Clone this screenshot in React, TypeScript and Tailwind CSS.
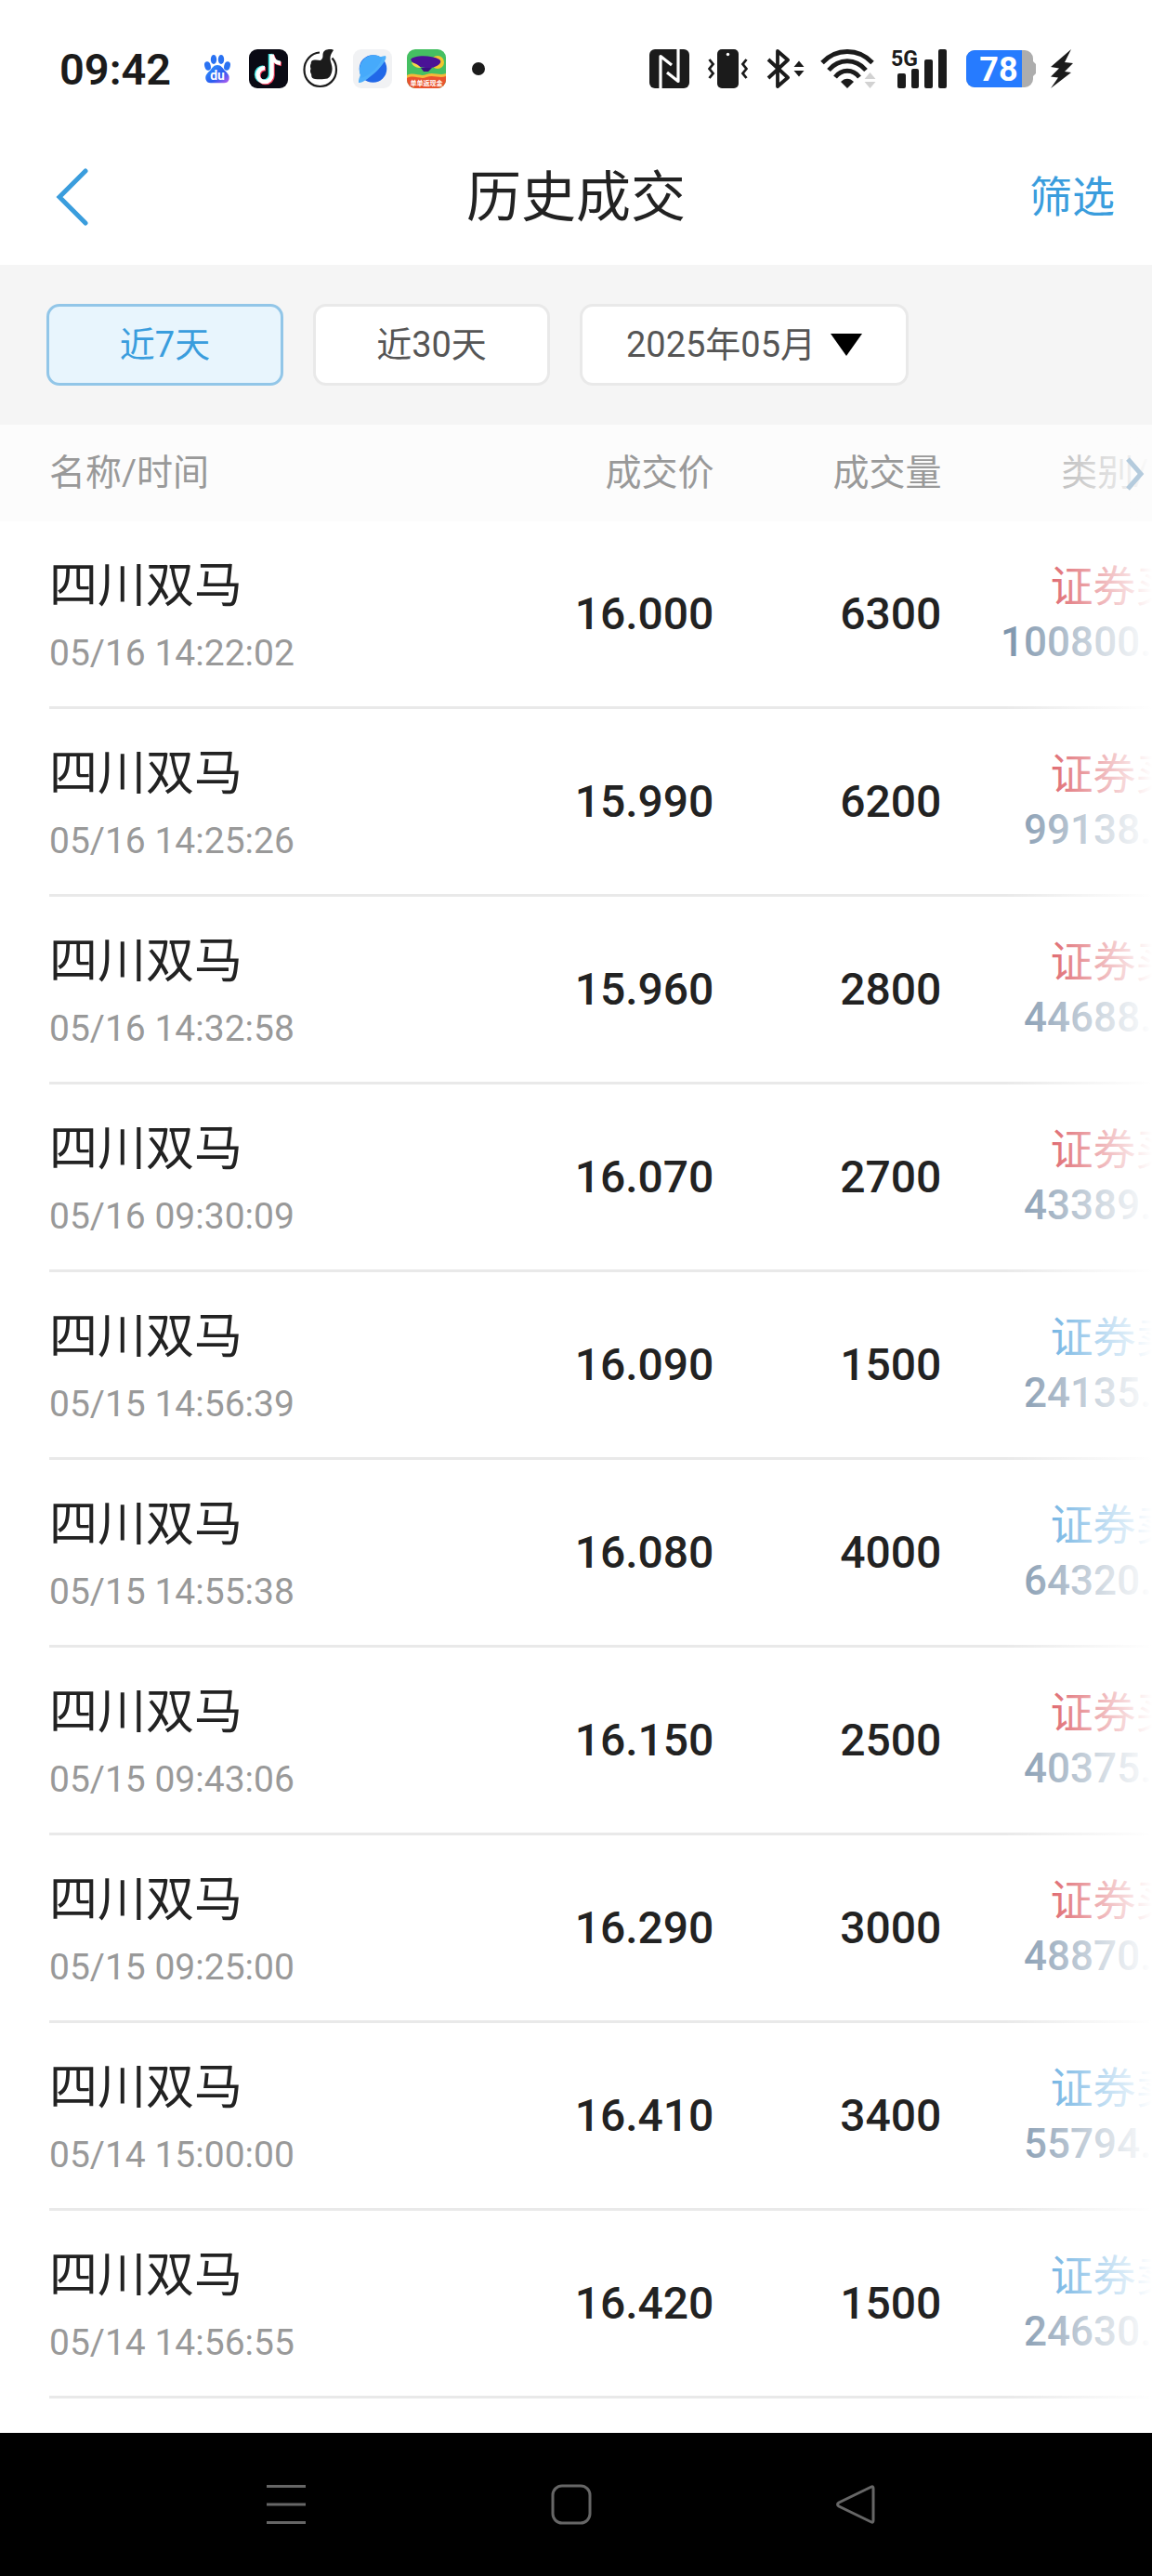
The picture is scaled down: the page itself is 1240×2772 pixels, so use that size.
import { useState } from "react";

type Trade = {
  time: string;
  price: string;
  volume: string;
  side: "buy" | "sell";
  amount: string;
};

const trades: Trade[] = [
  { time: "05/16 14:22:02", price: "16.000", volume: "6300", side: "buy", amount: "100800.000" },
  { time: "05/16 14:25:26", price: "15.990", volume: "6200", side: "buy", amount: "99138.000" },
  { time: "05/16 14:32:58", price: "15.960", volume: "2800", side: "buy", amount: "44688.000" },
  { time: "05/16 09:30:09", price: "16.070", volume: "2700", side: "buy", amount: "43389.000" },
  { time: "05/15 14:56:39", price: "16.090", volume: "1500", side: "sell", amount: "24135.000" },
  { time: "05/15 14:55:38", price: "16.080", volume: "4000", side: "sell", amount: "64320.000" },
  { time: "05/15 09:43:06", price: "16.150", volume: "2500", side: "buy", amount: "40375.000" },
  { time: "05/15 09:25:00", price: "16.290", volume: "3000", side: "buy", amount: "48870.000" },
  { time: "05/14 15:00:00", price: "16.410", volume: "3400", side: "sell", amount: "55794.000" },
  { time: "05/14 14:56:55", price: "16.420", volume: "1500", side: "sell", amount: "24630.000" },
];

function AppIcons() {
  return (
    <div className="flex items-center gap-4">
      {/* Baidu */}
      <svg width="36" height="42" viewBox="-3 0 36 42">
        <defs>
          <linearGradient id="paw" x1="0" y1="0" x2="1" y2="1">
            <stop offset="0" stopColor="#2f9bff" />
            <stop offset="0.6" stopColor="#2b5cf0" />
            <stop offset="1" stopColor="#c05cf0" />
          </linearGradient>
        </defs>
        <g fill="#2a72f2">
          <ellipse cx="4.5" cy="18" rx="3.3" ry="4.8" transform="rotate(-15 4.5 18)" />
          <ellipse cx="11" cy="11" rx="3.2" ry="5" />
          <ellipse cx="19" cy="11" rx="3.2" ry="5" />
          <ellipse cx="25.5" cy="18" rx="3.3" ry="4.8" transform="rotate(15 25.5 18)" />
        </g>
        <path d="M15 17c-4 0-5.5 3-8 6-3 3-5.5 5-4.5 9.5C3.5 36 6 36.5 9 36.200h12c3 .3 5.500-.2 6.500-3.700 1-4.500-1.500-6.500-4.500-9.500-2.500-3-4-6-8-6z" fill="url(#paw)" />
        <text x="15" y="33" fontSize="14" fontWeight="700" textAnchor="middle" fill="#fff" fontFamily="Roboto, sans-serif">du</text>
      </svg>
      {/* TikTok */}
      <svg width="42" height="42" viewBox="0 0 42 42">
        <rect width="42" height="42" rx="9" fill="#0a0a14" />
        <g fill="none" strokeWidth="4.5">
          <path d="M23 5v22a7.500 7.500 0 1 1-7.500-7.500M23 5c.5 5 4 9 9.500 9.500" stroke="#3be8e4" />
          <path d="M25.500 6.500v22a7.500 7.500 0 1 1-7.500-7.500M25.500 6.500c.5 5 4 9 9.500 9.500" stroke="#f53b5b" />
          <path d="M24.500 5.500v22a7.500 7.500 0 1 1-7.500-7.500M24.500 5.500c.5 5 4 9 9.500 9.500" stroke="#fff" />
        </g>
      </svg>
      {/* Thumb */}
      <svg width="38" height="42" viewBox="0 0 38 42">
        <path d="M18 3.500C9 4 1.500 12 1.500 22c0 11 8 18 17 18s17.500-7 17.500-18c0-5-1.500-9-4.500-12.500" fill="none" stroke="#1b1b1b" strokeWidth="2.200" />
        <path d="M33 1c-2 3-4 6-3.500 10 .3 3 2.500 7 2 11-.3 4-2 8-5 9.500-3 .8-9 1-13.500.5-3-.5-4-2-3.800-5-1.500-2-1.500-4-.7-6-.8-2-.7-4 .2-5.500C8.500 12 11 11 14 11.500l5 .5c2-1.500 2.500-3 2.500-5.500C21.500 3 23.500.5 27 .3 29-.3 32 0 33 1z" fill="#1b1b1b" />
      </svg>
      {/* Browser */}
      <svg width="42" height="42" viewBox="0 0 42 42">
        <rect width="42" height="42" rx="9" fill="#f1f2f4" />
        <circle cx="21.500" cy="21" r="14.800" fill="#2168e8" />
        <path d="M6 34C8 23 20 9 35 7c2 3-3 10-10 17C18 30 10 37 6 36z" fill="#4fb0fb" />
        <path d="M7 24C6 14 14 6 22 6.200c4 0 7 1 9.500 3.500C27 20 18 28 8.500 31z" fill="#46aafb" />
      </svg>
      {/* Shopping */}
      <svg width="42" height="42" viewBox="0 0 42 42">
        <defs>
          <clipPath id="shop">
            <rect width="42" height="42" rx="9" />
          </clipPath>
        </defs>
        <g clipPath="url(#shop)">
          <rect width="42" height="42" fill="#45bf62" />
          <circle cx="33" cy="14" r="7" fill="#f2c62e" />
          <path d="M4 11c4-5 22-5 31 0 4 3-2 8-9 9-8 1-19-2-22-9z" fill="#4a1296" />
          <path d="M15 20h12l-4 4h-5z" fill="#3a0f80" />
          <path d="M5 14c4 1 8 3 10 6-5 0-9-2-10-6z" fill="#f5d84a" />
          <path d="M0 29c8-4 14 2 21-1 8-3 14 2 21-1v15H0z" fill="#e9542f" />
          <path d="M0 28c8-4 14 2 21-1 8-3 14 2 21-1v3c-7 3-13-2-21 1-7 3-13-3-21 1z" fill="#f6b83a" />
          <text x="21" y="39" fontSize="7" fontWeight="700" textAnchor="middle" fill="#fff" fontFamily="Noto Sans CJK SC, sans-serif">单单返现金</text>
        </g>
      </svg>
      <span className="ml-3 size-3.5 rounded-full bg-[#1b1b1b]" />
    </div>
  );
}

function SystemIcons() {
  return (
    <div className="flex items-center text-[#1b1b1b]">
      {/* NFC */}
      <svg width="43" height="42" viewBox="0 0 43 42">
        <rect width="43" height="42" rx="6" fill="currentColor" />
        <path d="M12 42V7.500L24 17M31 0v34.500L19 25" fill="none" stroke="#fff" strokeWidth="3.200" strokeLinejoin="round" />
      </svg>
      {/* Vibrate */}
      <svg className="ml-5" width="43" height="42" viewBox="0 0 43 42">
        <rect x="10" width="23" height="42" rx="5" fill="currentColor" />
        <circle cx="21.500" cy="5.500" r="1.700" fill="#fff" />
        <path d="M1.500 11l4 5-4 5 4 5-4 5M41.500 11l-4 5 4 5-4 5 4 5" fill="none" stroke="currentColor" strokeWidth="2.800" />
      </svg>
      {/* Bluetooth */}
      <svg className="ml-5" width="42" height="42" viewBox="0 0 42 42">
        <path d="M2 11l21 19.500L12 40V2l11 9.500L2 31" fill="none" stroke="currentColor" strokeWidth="3.800" strokeLinejoin="round" />
        <path d="M29.500 19l5.500-6.500 5.500 6.500zM29.500 23l5.500 6.500 5.500-6.500z" fill="currentColor" />
      </svg>
      {/* Wi-Fi */}
      <svg className="ml-4" width="60" height="42" viewBox="0 0 60 42">
        <g fill="none" stroke="currentColor" strokeWidth="4.800">
          <path d="M2 14.500c15-16 39-16 54 0" />
          <path d="M9 22.500c11-13 29-13 40 0" />
          <path d="M16 30c7-9 19-9 26 0" />
        </g>
        <path d="M22 35c4-4.500 10-4.500 14 0l-7 7z" fill="currentColor" />
        <path d="M47.500 32l6-7 6 7zM47.500 35l6 7 6-7z" fill="#d2d2d2" />
      </svg>
      {/* 5G signal */}
      <svg className="ml-4" width="60" height="44" viewBox="0 0 60 44">
        <text x="0" y="19" fontSize="23" fontWeight="700" fill="currentColor" fontFamily="Roboto, sans-serif">5G</text>
        <g fill="currentColor">
          <rect x="7" y="27" width="9" height="16" rx="2" />
          <rect x="22" y="22" width="8" height="21" rx="2" />
          <rect x="36" y="12" width="9" height="31" rx="2" />
          <rect x="51" y="1" width="9" height="42" rx="2" />
        </g>
      </svg>
      {/* Battery */}
      <svg className="ml-5" width="77" height="42" viewBox="0 0 77 42">
        <path d="M10 1h54a9 9 0 0 1 9 9v3l3 3v10l-3 3v3a9 9 0 0 1-9 9H10a9 9 0 0 1-9-9V10a9 9 0 0 1 9-9z" fill="#adadad" />
        <path d="M10 1h51v40H10a9 9 0 0 1-9-9V10a9 9 0 0 1 9-9z" fill="#267bff" />
        <text x="36" y="34" fontSize="36" fontWeight="700" textAnchor="middle" fill="#fff" fontFamily="Roboto, sans-serif">78</text>
      </svg>
      {/* Charging */}
      <svg className="ml-3.5" width="26" height="42" viewBox="0 0 26 42">
        <path d="M23 0L1 19l9 1.500-9 9 8 1L1 42l22-17-7-1 9-9-9-1z" fill="currentColor" />
      </svg>
    </div>
  );
}

function StatusBar() {
  return (
    <div className="flex h-[140px] items-center justify-between pt-2 pr-[84px] pl-16">
      <div className="flex items-center gap-8">
        <span className="text-[47px] leading-none font-semibold text-[#1b1b1b]">09:42</span>
        <AppIcons />
      </div>
      <SystemIcons />
    </div>
  );
}

function NavBar() {
  return (
    <nav className="flex h-[154px] items-center justify-between bg-black pr-[297px] pl-[286px] text-[#666]">
      <button aria-label="最近任务">
        <svg width="44" height="44" viewBox="0 0 44 44" stroke="currentColor" strokeWidth="3">
          <path d="M1 2.500h42M1 22h42M1 41.500h42" />
        </svg>
      </button>
      <button aria-label="主屏幕">
        <svg width="44" height="44" viewBox="0 0 44 44" fill="none" stroke="currentColor" strokeWidth="3">
          <rect x="2" y="2" width="40" height="40" rx="10" />
        </svg>
      </button>
      <button aria-label="返回">
        <svg width="44" height="44" viewBox="0 0 44 44" fill="none" stroke="currentColor" strokeWidth="3">
          <path d="M39 3L4 20q-3 2 0 4l35 17q2 1 2-2V5q0-3-2-2z" />
        </svg>
      </button>
    </nav>
  );
}

const chip = "flex h-[88px] items-center justify-center rounded-[14px] border-3 text-[38px]";
const chipOn = "border-[#92c6e8] bg-[#e8f5fd] text-[#3a9ddd]";
const chipOff = "border-[#e9e9e9] bg-white text-[#555]";

const cell = "flex h-[202px] flex-col justify-center border-b-3 border-[#e9e9e9]";

export default function App() {
  const [range, setRange] = useState("7");

  return (
    <div className="flex min-h-screen flex-col overflow-x-hidden bg-white font-[Roboto,'Noto_Sans_CJK_SC',sans-serif] text-[#222]">
      <StatusBar />

      <header className="grid h-[145px] grid-cols-3 items-center px-10">
        <button aria-label="返回" className="justify-self-start pl-5 text-[#3a9ddd]">
          <svg width="36" height="64" viewBox="0 0 36 64" fill="none" stroke="currentColor" strokeWidth="5" strokeLinecap="round">
            <path d="M32 3L4 31l28 28" />
          </svg>
        </button>
        <h1 className="text-center text-[59px] leading-none whitespace-nowrap">历史成交</h1>
        <button className="justify-self-end text-[46px] text-[#3a9ddd]">筛选</button>
      </header>

      <div className="flex h-[172px] items-center gap-8 bg-[#f5f5f5] px-[50px]">
        <button onClick={() => setRange("7")} className={`${chip} w-[255px] ${range === "7" ? chipOn : chipOff}`}>
          近7天
        </button>
        <button onClick={() => setRange("30")} className={`${chip} w-[255px] ${range === "30" ? chipOn : chipOff}`}>
          近30天
        </button>
        <button onClick={() => setRange("month")} className={`${chip} w-[354px] gap-4 ${range === "month" ? chipOn : chipOff}`}>
          2025年05月
          <svg width="34" height="24" viewBox="0 0 34 24">
            <path d="M0 0h34L17 24z" fill="#000" />
          </svg>
        </button>
      </div>

      <main className="relative grow overflow-hidden">
        <table className="w-[106%] table-fixed border-collapse">
          <thead>
            <tr className="h-[104px] bg-[#fcfcfc] text-[39px] text-[#999]">
              <th className="pl-[53px] text-left font-normal">名称/时间</th>
              <th className="w-[330px] text-right font-normal">成交价</th>
              <th className="w-[245px] text-right font-normal">成交量</th>
              <th className="w-[301px] text-right font-normal">类别/金额</th>
            </tr>
          </thead>
          <tbody>
            {trades.map((t) => (
              <tr key={t.time} className="text-right">
                <td className="p-0 pl-[53px] text-left">
                  <div className={`${cell} gap-3 pt-3`}>
                    <span className="text-[52px] leading-[60px]">四川双马</span>
                    <span className="text-[39px] leading-[60px] text-[#999]">{t.time}</span>
                  </div>
                </td>
                <td className="p-0">
                  <div className={`${cell} text-[48px] font-medium`}>{t.price}</div>
                </td>
                <td className="p-0">
                  <div className={`${cell} text-[48px] font-medium`}>{t.volume}</div>
                </td>
                <td className="p-0">
                  <div className={cell}>
                    <span className={`text-[46px] leading-[60px] ${t.side === "buy" ? "text-[#d0252f]" : "text-[#3392d6]"}`}>
                      {t.side === "buy" ? "证券买入" : "证券卖出"}
                    </span>
                    <span className="text-[44px] leading-[60px] font-medium text-[#7a92aa]">{t.amount}</span>
                  </div>
                </td>
              </tr>
            ))}
          </tbody>
        </table>

        {/* Fade that hints at more columns to the right */}
        <div className="pointer-events-none absolute top-0 right-0 h-[104px] w-[160px] bg-linear-to-r from-[#fcfcfc]/0 to-[#fcfcfc]" />
        <div className="pointer-events-none absolute top-[104px] right-0 bottom-0 w-[160px] bg-linear-to-r from-white/0 to-white" />
        <button aria-label="更多" className="absolute top-[34px] right-2 text-[#b4cbdd]">
          <svg width="20" height="38" viewBox="0 0 20 38" fill="none" stroke="currentColor" strokeWidth="5">
            <path d="M2 3l14 16L2 35" />
          </svg>
        </button>
      </main>

      <NavBar />
    </div>
  );
}
